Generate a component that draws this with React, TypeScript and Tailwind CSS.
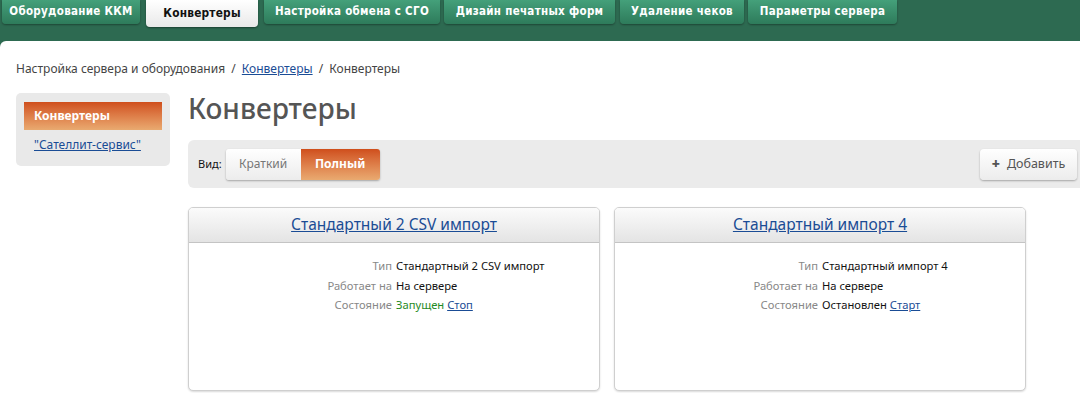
import React from "react";

const tabs: { t: string; w: number; ml: number }[] = [
  { t: "Оборудование ККМ", w: 138, ml: 2 },
  { t: "Конвертеры", w: 112, ml: 6 },
  { t: "Настройка обмена с СГО", w: 176, ml: 6 },
  { t: "Дизайн печатных форм", w: 171, ml: 4 },
  { t: "Удаление чеков", w: 124, ml: 5 },
  { t: "Параметры сервера", w: 149, ml: 4 },
];

function Card({ title, type, state }: { title: string; type: string; state: React.ReactNode }) {
  return (
    <div className="w-[412px] h-[184px] rounded-[5px] border border-[#cfcfcf] bg-white shadow-[0_1px_2px_rgba(0,0,0,0.15)] overflow-hidden">
      <div className="h-[35px] flex items-center justify-center bg-gradient-to-b from-[#fbfbfb] to-[#e4e4e4] border-b border-[#c4c4c4]">
        <a className="text-[15.5px] text-[#1a4c95] underline leading-none">{title}</a>
      </div>
      <div className="pt-[13px] text-[11.2px] leading-[19.5px]">
        <div className="grid grid-cols-2 gap-x-[4px]">
          <div className="text-right text-[#888]">Тип</div>
          <div className="text-[#111]">{type}</div>
          <div className="text-right text-[#888]">Работает на</div>
          <div className="text-[#111]">На сервере</div>
          <div className="text-right text-[#888]">Состояние</div>
          <div className="text-[#111]">{state}</div>
        </div>
      </div>
    </div>
  );
}

export default function App() {
  return (
    <div className="w-[1080px] h-[393px] overflow-hidden bg-white" style={{ fontFamily: '"Noto Sans", "Open Sans", sans-serif' }}>
      <div className="h-[41px] bg-[#2d6a51] relative">
        <div className="flex" style={{ fontFamily: '"DejaVu Sans Condensed", "DejaVu Sans", sans-serif' }}>
          {tabs.map((tab, i) =>
            i === 1 ? (
              <div
                key={tab.t}
                style={{ width: tab.w, marginLeft: tab.ml }}
                className="h-[27px] flex items-center justify-center rounded-b-[4px] bg-gradient-to-b from-[#ffffff] to-[#e9e9e9] text-[#111] font-bold text-[11.8px] tracking-[0.2px] shadow-[0_1px_2px_rgba(0,0,0,0.4)]"
              >
                {tab.t}
              </div>
            ) : (
              <div
                key={tab.t}
                style={{ width: tab.w, marginLeft: tab.ml }}
                className="h-[24px] pb-[1px] flex items-center justify-center rounded-b-[4px] bg-gradient-to-b from-[#44a07a] to-[#2e7b5b] text-white font-bold text-[11.5px] tracking-[0.3px] shadow-[0_1px_2px_rgba(0,0,0,0.35)]"
              >
                {tab.t}
              </div>
            )
          )}
        </div>
      </div>
      <div className="bg-[#2d6a51]">
        <div className="bg-white rounded-tl-[6px] h-[352px] pt-[20px]">
          <div className="pl-[16px] text-[12px] text-[#444] leading-[16px]">
            Настройка сервера и оборудования <span className="mx-[3px]">/</span>{" "}
            <a className="text-[#1a4c95] underline">Конвертеры</a> <span className="mx-[3px]">/</span> Конвертеры
          </div>
          <div className="flex mt-[16px]">
            <div className="ml-[16px] w-[154px] h-[73px] bg-[#e9e9e9] rounded-[5px] pt-[9px] px-[8px]">
              <div className="h-[28px] flex items-center pl-[10px] bg-gradient-to-b from-[#cf4e1b] to-[#e9aa70] text-white font-bold text-[12px]">
                Конвертеры
              </div>
              <a className="block mt-[7px] pl-[10px] text-[12px] text-[#1a4c95] underline leading-[16px]">"Сателлит-сервис"</a>
            </div>
            <div className="ml-[18px] flex-1">
              <div className="text-[28px] text-[#555] leading-[34px] -mt-[2px]" style={{ fontWeight: 500 }}>Конвертеры</div>
              <div className="mt-[15px] h-[48px] bg-[#ebebeb] rounded-l-[6px] flex items-center pl-[10px] pr-[3px]">
                <span className="text-[11px] text-[#111] mr-[4px]">Вид:</span>
                <div className="flex h-[31px] rounded-[3px] shadow-[0_1px_2px_rgba(0,0,0,0.3)]">
                  <div className="w-[75px] flex items-center justify-center bg-gradient-to-b from-white to-[#ececec] text-[#777] text-[12px] rounded-l-[3px]">Краткий</div>
                  <div className="w-[79px] flex items-center justify-center bg-gradient-to-b from-[#cf4e1b] to-[#e9aa70] text-white font-bold text-[12px] rounded-r-[3px]">Полный</div>
                </div>
                <div className="ml-auto h-[31px] w-[97px] flex items-center justify-center gap-[7px] rounded-[4px] bg-gradient-to-b from-white to-[#ececec] shadow-[0_1px_2px_rgba(0,0,0,0.3)] text-[12.5px] text-[#555]">
                  <span className="text-[#555] font-black text-[14px] leading-none">+</span>
                  Добавить
                </div>
              </div>
              <div className="flex gap-[14px] mt-[19px]">
                <Card
                  title="Стандартный 2 CSV импорт"
                  type="Стандартный 2 CSV импорт"
                  state={
                    <>
                      <span className="text-[#1f8a1f]">Запущен</span> <a className="text-[#1a4c95] underline">Стоп</a>
                    </>
                  }
                />
                <Card
                  title="Стандартный импорт 4"
                  type="Стандартный импорт 4"
                  state={
                    <>
                      Остановлен <a className="text-[#1a4c95] underline">Старт</a>
                    </>
                  }
                />
              </div>
            </div>
          </div>
        </div>
      </div>
    </div>
  );
}
